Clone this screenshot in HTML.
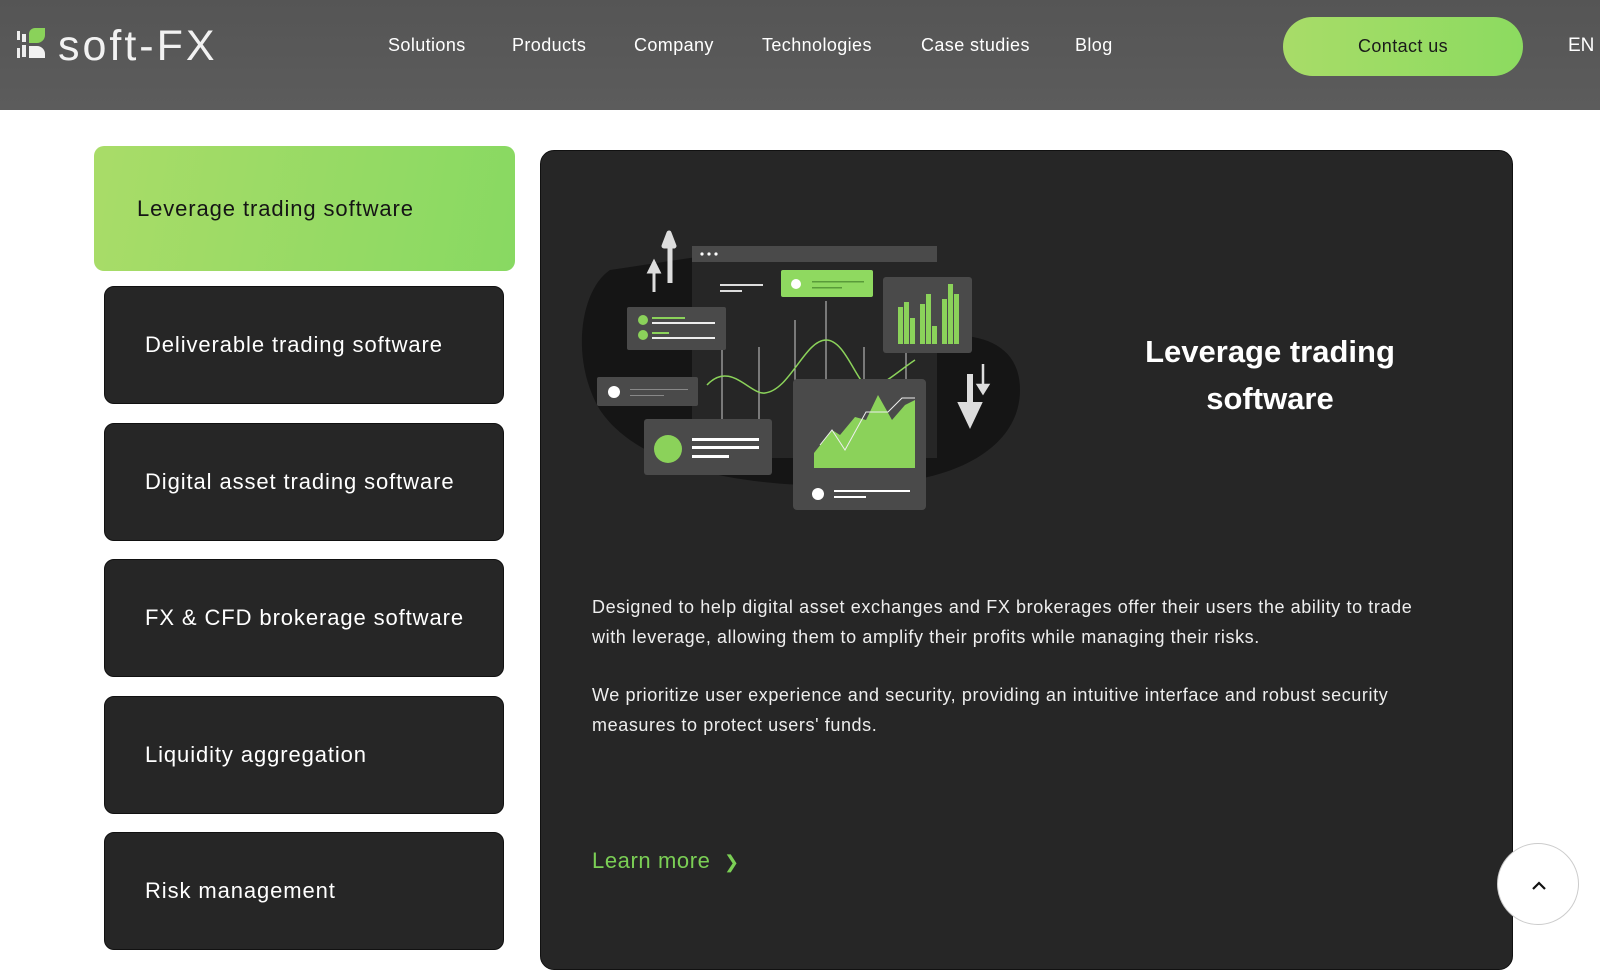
<!DOCTYPE html>
<html><head><meta charset="utf-8"><style>
*{margin:0;padding:0;box-sizing:border-box}
body{width:1600px;height:947px;overflow:hidden;background:#fff;font-family:"Liberation Sans",sans-serif;position:relative}
.hdr{position:absolute;left:0;top:0;width:1600px;height:110px;background:linear-gradient(#555,#5c5c5c)}
.logo{position:absolute;left:16px;top:22px;color:#f2f2f2;font-size:43px;letter-spacing:3px}
.nav a{position:absolute;top:35px;color:#fff;font-size:18px;text-decoration:none;letter-spacing:.4px}
.cta{position:absolute;left:1283px;top:17px;width:240px;height:59px;border-radius:30px;background:linear-gradient(90deg,#a8dc68,#8cdb60);color:#1a1a1a;font-size:18px;text-align:center;line-height:59px;letter-spacing:.4px}
.en{position:absolute;left:1568px;top:35px;color:#fff;font-size:19px}
.tab{position:absolute;left:104px;width:400px;height:118px;background:#262626;border-radius:10px;border:1px solid #111;color:#fff;font-size:22px;padding-left:40px;display:flex;align-items:center;letter-spacing:.9px}
.act{left:94px;top:146px;width:421px;height:125px;background:linear-gradient(100deg,#a9dc68,#88d962);color:#151515;border:none;padding-left:43px}
.panel{position:absolute;left:540px;top:150px;width:973px;height:820px;background:#262626;border-radius:14px;border:1px solid #111}
.ttl{position:absolute;left:1100px;top:328px;width:340px;text-align:center;color:#fff;font-size:31px;font-weight:bold;line-height:47px}
.p{position:absolute;left:592px;width:850px;color:#eee;font-size:18px;line-height:29.5px;letter-spacing:.6px}
.lm{position:absolute;left:592px;top:848px;color:#7bcf55;font-size:22px;letter-spacing:.6px}
.up{position:absolute;left:1497px;top:843px;width:82px;height:82px;border-radius:50%;background:#fff;border:1px solid #ccc}
</style></head><body>
<div class="hdr">
<div class="logo"><svg width="40" height="36" viewBox="0 0 40 36" style="vertical-align:-2px;margin-right:2px"><rect x="1" y="5" width="3" height="9" fill="#eee"/><rect x="6" y="8" width="4" height="8" fill="#eee"/><rect x="1" y="22" width="3" height="10" fill="#eee"/><rect x="6" y="19" width="4" height="12" fill="#eee"/><path d="M13 20 h8 a8 8 0 0 1 8 8 v4 h-16z" fill="#f2f2f2"/><path d="M13 17 v-9 a6 6 0 0 1 6-6 h10 v7 a8 8 0 0 1-8 8z" fill="#8ad25a"/></svg>soft-FX</div>
<div class="nav"><a style="left:388px">Solutions</a><a style="left:512px">Products</a><a style="left:634px">Company</a><a style="left:762px">Technologies</a><a style="left:921px">Case studies</a><a style="left:1075px">Blog</a></div>
<div class="cta">Contact us</div><div class="en">EN</div>
</div>
<div class="tab act">Leverage trading software</div>
<div class="tab" style="top:286px">Deliverable trading software</div>
<div class="tab" style="top:423px">Digital asset trading software</div>
<div class="tab" style="top:559px">FX &amp; CFD brokerage software</div>
<div class="tab" style="top:696px">Liquidity aggregation</div>
<div class="tab" style="top:832px">Risk management</div>
<div class="panel"></div>
<svg style="position:absolute;left:570px;top:210px" width="460" height="300" viewBox="0 0 460 300">
<path d="M40 60 C10 80 0 150 30 200 C70 260 180 280 300 275 C400 270 450 230 450 180 C450 140 420 125 380 125 L300 120 L140 45 Z" fill="#151515"/>
<rect x="122" y="36" width="245" height="212" fill="#262626"/><rect x="122" y="36" width="245" height="16" fill="#4a4a4a"/>
<circle cx="132" cy="44" r="1.6" fill="#fff"/><circle cx="139" cy="44" r="1.6" fill="#fff"/><circle cx="146" cy="44" r="1.6" fill="#fff"/>
<rect x="150" y="74" width="43" height="2" fill="#ddd"/><rect x="150" y="80" width="22" height="2" fill="#ddd"/>
<g stroke="#ccc" stroke-width="1"><line x1="152" y1="140" x2="152" y2="210"/><line x1="189" y1="137" x2="189" y2="210"/><line x1="225" y1="110" x2="225" y2="175"/><line x1="256" y1="91" x2="256" y2="175"/><line x1="294" y1="137" x2="294" y2="175"/><line x1="336" y1="140" x2="336" y2="175"/></g>
<path d="M137 175 C160 150 180 185 195 183 C220 180 235 130 256 130 C275 130 285 170 300 180 C320 170 330 160 345 150" stroke="#8bd25a" stroke-width="1.5" fill="none"/>
<rect x="211" y="60" width="92" height="27" rx="2" fill="#8fd960"/><circle cx="226" cy="74" r="5" fill="#fff"/><rect x="242" y="71" width="52" height="1.5" fill="#5a9a3a"/><rect x="242" y="77" width="30" height="1.5" fill="#5a9a3a"/>
<rect x="313" y="67" width="89" height="76" rx="3" fill="#4a4a4a"/>
<g fill="#8bd25a"><rect x="328" y="97" width="5" height="37"/><rect x="334" y="92" width="5" height="42"/><rect x="340" y="108" width="5" height="26"/><rect x="350" y="94" width="5" height="40"/><rect x="356" y="84" width="5" height="50"/><rect x="362" y="116" width="5" height="18"/><rect x="372" y="89" width="5" height="45"/><rect x="378" y="74" width="5" height="60"/><rect x="384" y="84" width="5" height="50"/></g>
<rect x="57" y="97" width="99" height="43" rx="2" fill="#4a4a4a"/><circle cx="73" cy="110" r="5" fill="#8bd25a"/><circle cx="73" cy="125" r="5" fill="#8bd25a"/><rect x="82" y="107" width="33" height="2" fill="#8bd25a"/><rect x="82" y="112" width="63" height="2" fill="#eee"/><rect x="82" y="122" width="17" height="2" fill="#8bd25a"/><rect x="82" y="127" width="63" height="2" fill="#eee"/>
<rect x="27" y="167" width="101" height="29" rx="2" fill="#4a4a4a"/><circle cx="44" cy="182" r="6" fill="#fff"/><rect x="60" y="179" width="58" height="1" fill="#888"/><rect x="60" y="185" width="34" height="1" fill="#888"/>
<rect x="74" y="209" width="128" height="56" rx="3" fill="#4a4a4a"/><circle cx="98" cy="239" r="14" fill="#8bd25a"/><rect x="122" y="228" width="67" height="3" fill="#fff"/><rect x="122" y="236" width="67" height="3" fill="#fff"/><rect x="122" y="245" width="37" height="3" fill="#fff"/>
<rect x="223" y="169" width="133" height="131" rx="4" fill="#4a4a4a"/><path d="M244 258 V243 L262 220 L270 225 L285 207 L296 210 L308 185 L322 210 L335 195 L345 190 V258Z" fill="#8bd25a"/><path d="M250 235 L262 220 L275 240 L296 202 L318 202 L332 188 L345 188" stroke="#eee" fill="none" stroke-width="1"/><circle cx="248" cy="284" r="6" fill="#fff"/><rect x="264" y="280" width="76" height="2" fill="#fff"/><rect x="264" y="286" width="32" height="2" fill="#fff"/>
<path d="M100 73 V36 H94 L99 23 L104 36 H99" fill="#ddd" stroke="#ddd" stroke-width="5" stroke-linejoin="round"/>
<path d="M84 82 V60 M79 62 L84 52 L89 62Z" stroke="#ddd" stroke-width="3" fill="#ddd"/>
<path d="M400 164 V195 M392 195 L400 212 L408 195Z" stroke="#ddd" stroke-width="6" fill="#ddd"/>
<path d="M413 154 V176 M408 175 L413 183 L418 175Z" stroke="#ddd" stroke-width="2.5" fill="#ddd"/>
</svg>
<div class="ttl">Leverage trading<br>software</div>
<div class="p" style="top:593px">Designed to help digital asset exchanges and FX brokerages offer their users the ability to trade<br>with leverage, allowing them to amplify their profits while managing their risks.</div>
<div class="p" style="top:681px">We prioritize user experience and security, providing an intuitive interface and robust security<br>measures to protect users' funds.</div>
<div class="lm">Learn more &nbsp;<span style="font-size:18px">&#x276F;</span></div>
<div class="up"><svg width="82" height="82" viewBox="0 0 82 82"><path d="M35 45 L41 39 L47 45" stroke="#111" stroke-width="2.2" fill="none"/></svg></div>
</body></html>
